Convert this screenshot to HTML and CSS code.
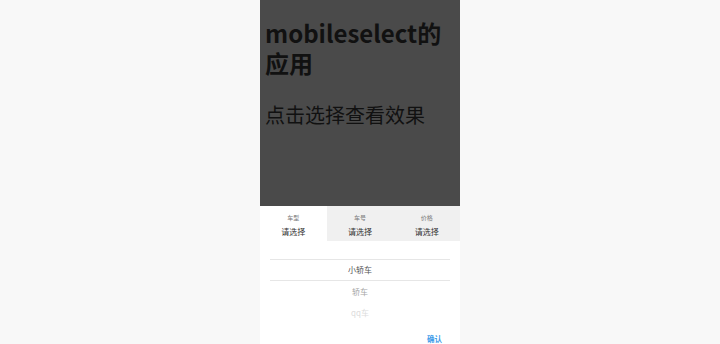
FILE: index.html
```html
<!DOCTYPE html>
<html lang="zh">
<head>
<meta charset="utf-8">
<title>mobileselect的应用</title>
<link rel="stylesheet" href="styles.css">
</head>
<body>
<div class="phone">
  <div class="cover">
    <h1 class="title">mobileselect的应用</h1>
    <p class="hint">点击选择查看效果</p>
  </div>
  <div class="panel">
    <div class="tabs">
      <div class="tab active"><span class="tab-label">车型</span><span class="tab-value">请选择</span></div>
      <div class="tab"><span class="tab-label">车号</span><span class="tab-value">请选择</span></div>
      <div class="tab"><span class="tab-label">价格</span><span class="tab-value">请选择</span></div>
    </div>
    <div class="wheel">
      <div class="item selected">小轿车</div>
      <div class="item near">轿车</div>
      <div class="item far">qq车</div>
    </div>
    <div class="actions"><span class="confirm">确认</span></div>
  </div>
</div>
</body>
</html>
```

FILE: styles.css
```css
html, body {
  margin: 0;
  padding: 0;
}
body {
  background: #f8f8f8;
  font-family: "Noto Sans CJK SC", "Noto Sans", sans-serif;
}
.phone {
  width: 200px;
  height: 344px;
  margin: 0 auto;
  background: #fff;
  display: flex;
  flex-direction: column;
  overflow: hidden;
}
.cover {
  height: 206px;
  flex: none;
  background: #4a4a4a;
  padding: 0 5px;
  box-sizing: border-box;
  overflow: hidden;
  color: #111;
}
.title {
  margin: 18px 0 0;
  font-size: 24px;
  line-height: 30px;
  font-weight: bold;
}
.hint {
  margin: 22px 0 0;
  font-size: 20px;
  line-height: 29px;
  font-weight: normal;
}
.panel {
  flex: 1;
  display: flex;
  flex-direction: column;
}
.tabs {
  display: grid;
  grid-template-columns: 1fr 1fr 1fr;
  height: 35px;
}
.tab {
  background: #f0f0f0;
  display: flex;
  flex-direction: column;
  align-items: center;
  padding-top: 7px;
  box-sizing: border-box;
}
.tab.active {
  background: #fff;
}
.tab-label {
  font-size: 6px;
  line-height: 9px;
  color: #777;
}
.tab-value {
  font-size: 8px;
  line-height: 12px;
  margin-top: 4px;
  color: #333;
}
.wheel {
  padding: 18px 10px 0;
}
.item {
  height: 21px;
  line-height: 21px;
  font-size: 8px;
  text-align: center;
}
.item.selected {
  height: 20px;
  line-height: 20px;
  border-top: 1px solid #e6e6e6;
  border-bottom: 1px solid #e6e6e6;
  color: #555;
}
.item.near {
  color: #a6a6a6;
}
.item.far {
  color: #dcdcdc;
}
.actions {
  padding: 6px 18px 0 0;
  text-align: right;
  line-height: 12px;
}
.confirm {
  font-size: 7.5px;
  font-weight: bold;
  color: #3d9be9;
}
```
